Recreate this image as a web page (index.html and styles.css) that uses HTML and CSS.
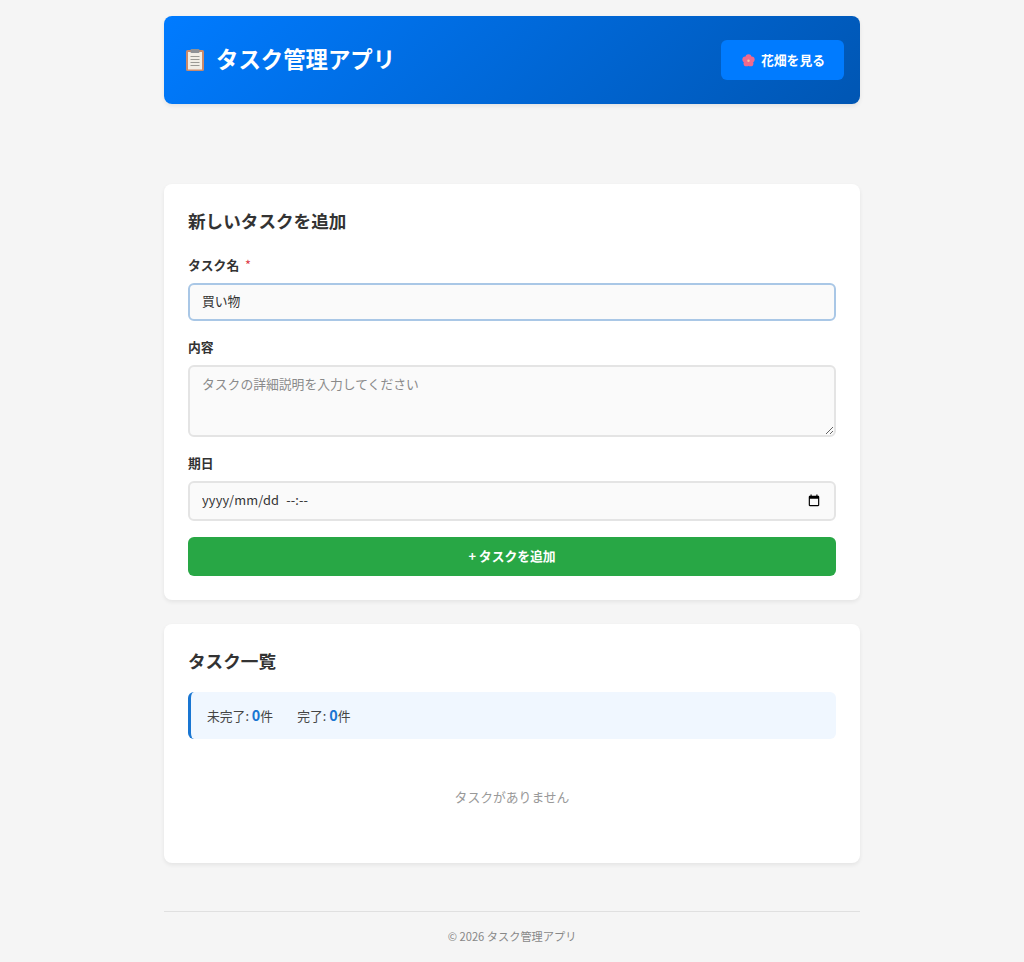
FILE: index.html
```html
<!DOCTYPE html>
<html lang="ja">
<head>
    <meta charset="utf-8">
    <title>タスク管理アプリ</title>
    <link rel="stylesheet" href="styles.css">
</head>
<body>
    <div class="container">
        <header class="app-header">
            <h1 class="app-title">
                <svg class="title-icon" width="18" height="22" viewBox="0 0 18 22">
                    <rect x="0" y="1" width="18" height="21" rx="1.5" fill="#c98a6c"/>
                    <rect x="2" y="3" width="14" height="17.5" fill="#f1eee6"/>
                    <rect x="4.5" y="0" width="9" height="4" rx="1" fill="#8f9296"/>
                    <path d="M4.5 7.5h9M4.5 10.5h9M4.5 13.5h9M4.5 16.5h9" stroke="#9b9a94" stroke-width="1.2"/>
                </svg>
                <span class="title-text">タスク管理アプリ</span>
            </h1>
            <a class="garden-link" href="#">
                <svg class="flower-icon" width="13" height="13" viewBox="0 0 14 14">
                    <circle cx="7" cy="3.6" r="3.2" fill="#ee6a8e"/>
                    <circle cx="10.4" cy="6" r="3.2" fill="#ee6a8e"/>
                    <circle cx="9.1" cy="10.1" r="3.2" fill="#ee6a8e"/>
                    <circle cx="4.9" cy="10.1" r="3.2" fill="#ee6a8e"/>
                    <circle cx="3.6" cy="6" r="3.2" fill="#ee6a8e"/>
                    <circle cx="7" cy="7.2" r="1.3" fill="#f9c2a0"/>
                </svg>
                <span class="garden-text">花畑を見る</span>
            </a>
        </header>

        <section class="card add-card">
            <h2 class="card-title">新しいタスクを追加</h2>
            <form class="task-form">
                <div class="form-group">
                    <label for="taskName">タスク名 <span class="required">*</span></label>
                    <input class="field field-focus" id="taskName" type="text" value="買い物">
                </div>
                <div class="form-group">
                    <label for="taskBody">内容</label>
                    <textarea class="field field-area" id="taskBody" placeholder="タスクの詳細説明を入力してください"></textarea>
                </div>
                <div class="form-group">
                    <label for="taskDue">期日</label>
                    <div class="field field-date">
                        <input class="date-text" id="taskDue" type="text" value="yyyy/mm/dd --:--">
                        <svg class="date-icon" width="14" height="14" viewBox="0 0 24 24">
                            <path d="M19 3h-1V1h-2v2H8V1H6v2H5c-1.1 0-2 .9-2 2v14c0 1.1.9 2 2 2h14c1.1 0 2-.9 2-2V5c0-1.1-.9-2-2-2zm0 16H5V8h14v11z"/>
                        </svg>
                    </div>
                </div>
                <button class="submit-button" type="button">+ タスクを追加</button>
            </form>
        </section>

        <section class="card list-card">
            <h2 class="card-title">タスク一覧</h2>
            <div class="stats">
                <span>未完了: <strong>0</strong>件</span>
                <span>完了: <strong>0</strong>件</span>
            </div>
            <p class="empty">タスクがありません</p>
        </section>

        <footer class="app-footer">© 2026 タスク管理アプリ</footer>
    </div>
</body>
</html>
```

FILE: styles.css
```css
* {
    box-sizing: border-box;
}
body {
    font-family: "Noto Sans CJK JP", "Noto Sans", sans-serif;
    margin: 0;
    background-color: #f5f5f5;
    color: #333;
}
.container {
    max-width: 696px;
    margin: 0 auto;
    padding-top: 16px;
}
.app-header {
    display: flex;
    justify-content: space-between;
    align-items: center;
    height: 88px;
    padding: 0 16px 0 22px;
    margin-bottom: 80px;
    border-radius: 8px;
    background: linear-gradient(135deg, #007bff, #0056b3);
    box-shadow: 0 2px 4px rgba(0, 0, 0, 0.08);
    color: white;
}
.app-title {
    display: flex;
    align-items: center;
    gap: 12px;
    margin: 0;
    font-size: 22.4px;
    font-weight: 700;
}
.title-text {
    padding-bottom: 5px;
}
.garden-link {
    display: flex;
    align-items: center;
    justify-content: center;
    gap: 6px;
    width: 123px;
    height: 40px;
    padding-left: 2px;
    border-radius: 6px;
    background-color: #007bff;
    color: white;
    font-size: 12.8px;
    font-weight: 700;
    text-decoration: none;
}
.flower-icon {
    margin-top: 1px;
}
.garden-text {
    padding-bottom: 1px;
}
.card {
    padding: 24px;
    margin-bottom: 24px;
    border-radius: 8px;
    background-color: white;
    box-shadow: 0 2px 4px rgba(0, 0, 0, 0.07);
}
.card-title {
    margin: 0 0 16px;
    padding-bottom: 2px;
    font-size: 17.6px;
    line-height: 26px;
    font-weight: 700;
}
.task-form {
    padding-top: 3px;
}
.form-group {
    margin-bottom: 16px;
}
.form-group label {
    display: block;
    margin-bottom: 8px;
    font-size: 12.8px;
    line-height: 19.5px;
    font-weight: 700;
}
.required {
    margin-left: 3px;
    color: #dc3545;
    font-weight: 400;
}
.field {
    display: block;
    width: 100%;
    height: 38.5px;
    padding: 0 12px 2px;
    border: 2px solid #e4e4e4;
    border-radius: 6px;
    background-color: #fafafa;
    color: #333;
    font-family: inherit;
    font-size: 12.8px;
}
.field-focus {
    border-color: #a9c7e6;
    outline: none;
}
.field-area {
    height: 72.5px;
    padding: 7px 12px;
    resize: vertical;
}
.field-area::placeholder {
    color: #8a8a8a;
}
.field-date {
    display: flex;
    align-items: center;
    justify-content: space-between;
    height: 40px;
}
.date-text {
    flex: 1;
    padding: 0;
    border: none;
    outline: none;
    background: none;
    color: inherit;
    font: inherit;
    word-spacing: 4px;
    letter-spacing: 0.15px;
}
.date-icon {
    flex: none;
    margin: 2px 1px 0 0;
}
.submit-button {
    display: block;
    width: 100%;
    height: 39.5px;
    padding: 0 0 2px;
    border: none;
    border-radius: 6px;
    background-color: #28a745;
    color: white;
    font-family: inherit;
    font-size: 12.8px;
    font-weight: 700;
}
.stats {
    display: flex;
    gap: 24px;
    height: 47px;
    align-items: center;
    padding: 0 0 3px 16px;
    border-left: 3px solid #1976d2;
    border-radius: 6px;
    background-color: #f0f7ff;
    font-size: 12.8px;
    color: #444;
}
.stats strong {
    color: #1976d2;
    font-size: 14.4px;
}
.empty {
    margin: 0;
    padding: 48px 0 32px;
    color: #999;
    font-size: 12.8px;
    line-height: 20px;
    text-align: center;
}
.app-footer {
    margin-top: 48px;
    padding-top: 15px;
    border-top: 1px solid #e0e0e0;
    color: #888;
    font-size: 11.2px;
    line-height: 18px;
    text-align: center;
}
```
